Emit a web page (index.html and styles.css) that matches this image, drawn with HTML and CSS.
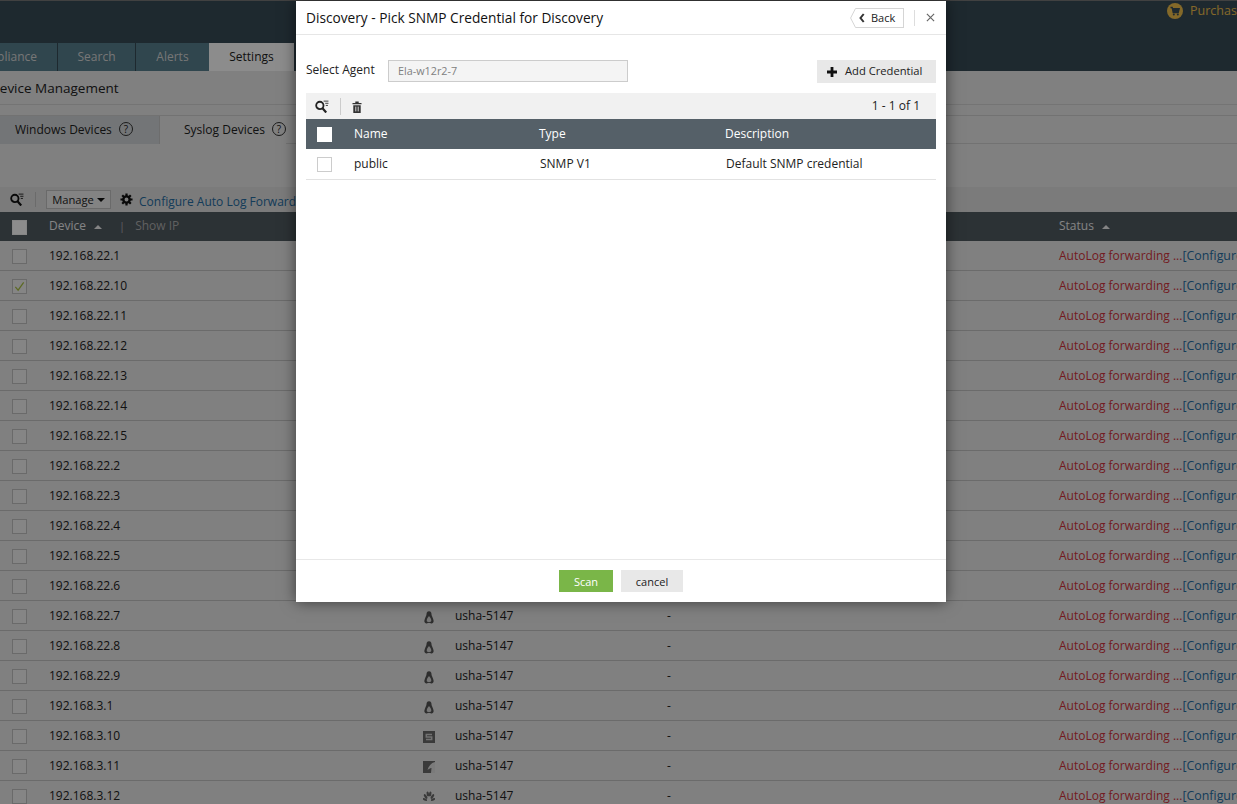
FILE: index.html
```html
<!DOCTYPE html>
<html lang="en">
<head>
<meta charset="utf-8">
<title>Device Management</title>
<link rel="stylesheet" href="styles.css">
</head>
<body>
<svg class="sprites" width="0" height="0" aria-hidden="true">
  <symbol id="i-search" viewBox="0 0 13 12"><circle cx="4.500" cy="5" r="3.400" fill="none" stroke="currentColor" stroke-width="1.700"/><path d="M7 7.600l3.400 4" stroke="currentColor" stroke-width="2" fill="none"/><path d="M8 1h4.500M9.500 3h3M10 5h2" stroke="currentColor" stroke-width=".8" fill="none"/></symbol>
  <symbol id="i-trash" viewBox="0 0 10 12"><path d="M.5 2h9v1.300h-9zM3.300.6h3.400V2H3.300zM1.300 4.200h7.400V12H1.300z" fill="currentColor"/><path d="M3.800 5.600v4.800M6.200 5.600v4.800" stroke="#fff" stroke-width=".8"/></symbol>
  <symbol id="i-linux" viewBox="0 0 10 13"><path d="M5 .2C3 .2 2.500 1.700 2.500 3.200 2.500 4.600 1.500 5.800 .9 7.800.5 9.200.2 10.300.5 11c.4.900 1 1.200 1.800 1.500.7.300 1.200 0 1.500-.4h2.400c.3.400.8.700 1.500.4.800-.3 1.400-.6 1.800-1.500.3-.7 0-1.800-.4-3.200C8.500 5.800 7.500 4.600 7.500 3.200 7.500 1.700 7 .2 5 .2z" fill="currentColor"/><path d="M5 5c-.9 1-2.300 2.900-2.300 4.600 0 1 1 1.700 2.300 1.700s2.300-.7 2.300-1.700C7.300 7.900 5.900 6 5 5z" fill="#d8d8d8"/></symbol>
  <symbol id="i-gear" viewBox="0 0 14 14"><circle cx="7" cy="7" r="3.400" fill="none" stroke="currentColor" stroke-width="2.600"/><path d="M7 .5v3M7 10.500v3M.5 7h3M10.500 7h3M2.400 2.400l2.100 2.100M9.500 9.500l2.100 2.100M11.600 2.400L9.500 4.500M4.500 9.500l-2.100 2.100" stroke="currentColor" stroke-width="2.400"/></symbol>
</svg>

<div class="page">
  <header class="topbar">
    <div class="brandrow">
      <span class="purchase">
        <svg class="coin" viewBox="0 0 16 16"><circle cx="8" cy="8" r="8" fill="#f0bf4c"/><path d="M3.500 4.500h1.700l1 5h5l1-3.800H5.600" fill="#384c57" stroke="#384c57" stroke-width="1.300"/><circle cx="6.800" cy="11.600" r="1" fill="#384c57"/><circle cx="10.800" cy="11.600" r="1" fill="#384c57"/></svg>
        Purchase
      </span>
    </div>
    <nav class="tabs">
      <a class="tab tab-first"><span>Compliance</span></a>
      <a class="tab tab-search">Search</a>
      <a class="tab tab-alerts">Alerts</a>
      <a class="tab tab-active">Settings</a>
    </nav>
  </header>

  <h1 class="pagehead"><span>Device Management</span></h1>

  <div class="subtabs">
    <div class="subtab subtab-off">Windows Devices <span class="help">?</span></div>
    <div class="subtab subtab-on">Syslog Devices <span class="help">?</span></div>
  </div>

  <div class="toolbar">
    <svg class="tool-search"><use href="#i-search"/></svg>
    <span class="tool-sep"></span>
    <button class="manage">Manage <i class="caret"></i></button>
    <svg class="tool-gear"><use href="#i-gear"/></svg>
    <a class="tool-link">Configure Auto Log Forwarding</a>
  </div>

  <div class="grid-head">
    <span class="cell-check"><i class="box box-head"></i></span>
    <span class="head-text">Device <i class="sort"></i><em class="pipe">|</em><em class="showip">Show IP</em></span>
    <span></span><span></span><span></span>
    <span class="head-text">Status <i class="sort"></i></span>
  </div>

  <div class="grid-body">
    <div class="row"><span class="cell-check"><i class="box"></i></span><span>192.168.22.1</span><span></span><span></span><span></span><span class="status"><b>AutoLog forwarding ...</b><a>[Configure]</a></span></div>
    <div class="row"><span class="cell-check"><i class="box box-on"><svg viewBox="0 0 14 14"><path d="M2.500 7.500l3 3.500 6-8.500" fill="none" stroke="#a8c040" stroke-width="1.300"/></svg></i></span><span>192.168.22.10</span><span></span><span></span><span></span><span class="status"><b>AutoLog forwarding ...</b><a>[Configure]</a></span></div>
    <div class="row"><span class="cell-check"><i class="box"></i></span><span>192.168.22.11</span><span></span><span></span><span></span><span class="status"><b>AutoLog forwarding ...</b><a>[Configure]</a></span></div>
    <div class="row"><span class="cell-check"><i class="box"></i></span><span>192.168.22.12</span><span></span><span></span><span></span><span class="status"><b>AutoLog forwarding ...</b><a>[Configure]</a></span></div>
    <div class="row"><span class="cell-check"><i class="box"></i></span><span>192.168.22.13</span><span></span><span></span><span></span><span class="status"><b>AutoLog forwarding ...</b><a>[Configure]</a></span></div>
    <div class="row"><span class="cell-check"><i class="box"></i></span><span>192.168.22.14</span><span></span><span></span><span></span><span class="status"><b>AutoLog forwarding ...</b><a>[Configure]</a></span></div>
    <div class="row"><span class="cell-check"><i class="box"></i></span><span>192.168.22.15</span><span></span><span></span><span></span><span class="status"><b>AutoLog forwarding ...</b><a>[Configure]</a></span></div>
    <div class="row"><span class="cell-check"><i class="box"></i></span><span>192.168.22.2</span><span></span><span></span><span></span><span class="status"><b>AutoLog forwarding ...</b><a>[Configure]</a></span></div>
    <div class="row"><span class="cell-check"><i class="box"></i></span><span>192.168.22.3</span><span></span><span></span><span></span><span class="status"><b>AutoLog forwarding ...</b><a>[Configure]</a></span></div>
    <div class="row"><span class="cell-check"><i class="box"></i></span><span>192.168.22.4</span><span></span><span></span><span></span><span class="status"><b>AutoLog forwarding ...</b><a>[Configure]</a></span></div>
    <div class="row"><span class="cell-check"><i class="box"></i></span><span>192.168.22.5</span><span></span><span></span><span></span><span class="status"><b>AutoLog forwarding ...</b><a>[Configure]</a></span></div>
    <div class="row"><span class="cell-check"><i class="box"></i></span><span>192.168.22.6</span><span></span><span></span><span></span><span class="status"><b>AutoLog forwarding ...</b><a>[Configure]</a></span></div>
    <div class="row"><span class="cell-check"><i class="box"></i></span><span>192.168.22.7</span><span class="os"><svg class="os-icon"><use href="#i-linux"/></svg></span><span>usha-5147</span><span>-</span><span class="status"><b>AutoLog forwarding ...</b><a>[Configure]</a></span></div>
    <div class="row"><span class="cell-check"><i class="box"></i></span><span>192.168.22.8</span><span class="os"><svg class="os-icon"><use href="#i-linux"/></svg></span><span>usha-5147</span><span>-</span><span class="status"><b>AutoLog forwarding ...</b><a>[Configure]</a></span></div>
    <div class="row"><span class="cell-check"><i class="box"></i></span><span>192.168.22.9</span><span class="os"><svg class="os-icon"><use href="#i-linux"/></svg></span><span>usha-5147</span><span>-</span><span class="status"><b>AutoLog forwarding ...</b><a>[Configure]</a></span></div>
    <div class="row"><span class="cell-check"><i class="box"></i></span><span>192.168.3.1</span><span class="os"><svg class="os-icon"><use href="#i-linux"/></svg></span><span>usha-5147</span><span>-</span><span class="status"><b>AutoLog forwarding ...</b><a>[Configure]</a></span></div>
    <div class="row"><span class="cell-check"><i class="box"></i></span><span>192.168.3.10</span><span class="os"><svg class="os-square" viewBox="0 0 12 12"><path d="M0 0h12v12H0z" fill="currentColor"/><path d="M9 3.400H3.300v2.600h5.400v2.600H3" fill="none" stroke="#d0d0d0" stroke-width="1.500"/></svg></span><span>usha-5147</span><span>-</span><span class="status"><b>AutoLog forwarding ...</b><a>[Configure]</a></span></div>
    <div class="row"><span class="cell-check"><i class="box"></i></span><span>192.168.3.11</span><span class="os"><svg class="os-square" viewBox="0 0 12 12"><path d="M0 0h12v12H0z" fill="currentColor"/><path d="M12 1C8 2 5.500 5 4.500 9 6.500 7.500 7.800 7 8.500 7L8 12h4z" fill="#e0e0e0"/></svg></span><span>usha-5147</span><span>-</span><span class="status"><b>AutoLog forwarding ...</b><a>[Configure]</a></span></div>
    <div class="row"><span class="cell-check"><i class="box"></i></span><span>192.168.3.12</span><span class="os"><svg class="os-square" viewBox="0 0 12 12"><g fill="currentColor"><ellipse cx="4.800" cy="3" rx="1.200" ry="2.600" transform="rotate(-10 4.800 3)"/><ellipse cx="7.200" cy="3" rx="1.200" ry="2.600" transform="rotate(10 7.200 3)"/><ellipse cx="2.600" cy="5.500" rx="1.200" ry="2.700" transform="rotate(-35 2.600 5.500)"/><ellipse cx="9.400" cy="5.500" rx="1.200" ry="2.700" transform="rotate(35 9.400 5.500)"/><ellipse cx="1.900" cy="8.500" rx="1.100" ry="2.300" transform="rotate(-65 1.900 8.500)"/><ellipse cx="10.100" cy="8.500" rx="1.100" ry="2.300" transform="rotate(65 10.100 8.500)"/></g></svg></span><span>usha-5147</span><span>-</span><span class="status"><b>AutoLog forwarding ...</b><a>[Configure]</a></span></div>
  </div>
</div>

<div class="backdrop"></div>

<section class="modal">
  <header class="modal-head">
    <h2 class="modal-title">Discovery - Pick SNMP Credential for Discovery</h2>
    <button class="back"><svg class="back-tip" viewBox="0 0 7 20"><path d="M7 .5H5.500L.6 10l4.900 9.500H7" fill="#fff" stroke="#d5d5d5"/></svg><svg class="back-chev" viewBox="0 0 6 10"><path d="M4.700 1L1.500 5l3.200 4" fill="none" stroke="#333" stroke-width="2"/></svg>Back</button>
    <span class="head-sep"></span>
    <button class="close"><svg viewBox="0 0 10 10"><path d="M1 1l8 8M9 1l-8 8" stroke="#666" stroke-width="1.300" fill="none"/></svg></button>
  </header>

  <div class="modal-body">
    <div class="agent-row">
      <label class="agent-label">Select Agent</label>
      <div class="agent-input">Ela-w12r2-7</div>
      <button class="add"><svg viewBox="0 0 10 10"><path d="M3.600 0h2.800v3.600H10v2.800H6.400V10H3.600V6.400H0V3.600h3.600z" fill="#111"/></svg>Add Credential</button>
    </div>

    <div class="cred-tools">
      <svg class="cred-search"><use href="#i-search"/></svg>
      <span class="cred-sep"></span>
      <svg class="cred-trash"><use href="#i-trash"/></svg>
      <span class="pager">1 - 1 of 1</span>
    </div>
    <div class="cred-head">
      <span class="cred-check"><i class="cbox cbox-head"></i></span>
      <span class="cred-label">Name</span><span class="cred-label">Type</span><span class="cred-label">Description</span>
    </div>
    <div class="cred-row">
      <span class="cred-check"><i class="cbox"></i></span>
      <span class="cred-value">public</span><span class="cred-value">SNMP V1</span><span class="cred-value">Default SNMP credential</span>
    </div>
  </div>

  <footer class="modal-foot">
    <button class="scan">Scan</button>
    <button class="cancel">cancel</button>
  </footer>
</section>
</body>
</html>
```

FILE: styles.css
```css
* { box-sizing: border-box; }
html, body { margin: 0; padding: 0; height: 100%; }
body {
  width: 1237px;
  height: 804px;
  overflow: hidden;
  position: relative;
  background: #e9e9e9;
  font-family: "Open Sans", "Liberation Sans", sans-serif;
  font-size: 12px;
  color: #222;
}
.sprites { position: absolute; }
button { font-family: inherit; border: 0; padding: 0; cursor: pointer; }
h1, h2 { margin: 0; font-weight: 500; }
em, i { font-style: normal; }

.page { width: 1237px; height: 804px; overflow: hidden; background: #e9e9e9; }

/* top bar */
.topbar { height: 71px; background: #384c57; border-top: 1px solid #777; }
.brandrow { height: 42px; display: flex; justify-content: flex-end; padding-top: 2px; }
.purchase { display: flex; gap: 7px; width: 70px; height: 15px; align-items: center; color: #f0bf4c; font-size: 12.500px; white-space: nowrap; flex-shrink: 0; }
.coin { width: 16px; height: 16px; flex-shrink: 0; }
.tabs { display: flex; height: 28px; }
.tab { display: flex; align-items: center; justify-content: center; background: #58808f; color: #d8d8d8; font-size: 12px; border-right: 1px solid #384c57; padding-bottom: 2px; }
.tab-first { width: 58px; justify-content: flex-end; padding-right: 20px; overflow: hidden; white-space: nowrap; }
.tab-search { width: 78px; }
.tab-alerts { width: 73px; border-right: 0; }
.tab-active { width: 85px; background: #fff; color: #222; border-right: 0; }

.pagehead { height: 34px; border-bottom: 1px solid #d4d4d4; font-size: 13.500px; color: #222; display: flex; justify-content: flex-start; align-items: center; overflow: hidden; white-space: nowrap; }
.pagehead span { margin-left: -10px; }

.subtabs { margin-top: 10px; height: 29px; display: flex; border-top: 1px solid #d0d0d0; border-bottom: 1px solid #d0d0d0; }
.subtab { display: flex; align-items: center; gap: 7px; font-size: 12px; height: 28px; padding-bottom: 2px; }
.subtab-off { width: 160px; padding-left: 15px; background: #d2d6d9; border-right: 1px solid #c6c6c6; }
.subtab-on { padding-left: 24px; background: #e9e9e9; }
.help { width: 14px; height: 14px; border: 1px solid #333; border-radius: 50%; font-size: 10px; display: inline-flex; align-items: center; justify-content: center; }

.toolbar { margin-top: 43px; height: 25px; background: #e0e0e0; display: flex; align-items: center; }
.tool-search { width: 14px; height: 13px; margin-left: 10px; color: #111; }
.tool-sep { width: 1px; height: 15px; background: #c4c4c4; margin: 0 10px 0 11px; }
.manage { width: 65px; height: 19px; border: 1px solid #c2c2c2; background: #efefef; color: #222; font-size: 11.200px; display: flex; align-items: center; justify-content: center; gap: 3px; }
.caret { width: 0; height: 0; border: 4px solid transparent; border-top: 4px solid #111; border-bottom: 0; }
.tool-gear { width: 13px; height: 13px; margin-left: 9px; color: #111; }
.tool-link { margin-left: 6px; color: #266da3; font-size: 12px; white-space: nowrap; position: relative; top: 2px; }

.grid-head, .row {
  display: grid;
  grid-template-columns: 49px 372px 34px 212px 392px 178px;
  align-items: center;
  white-space: nowrap;
}
.grid-head { height: 29px; background: #505b62; color: #f0f0f0; font-size: 12px; }
.head-text { margin-bottom: 2px; }
.cell-check { display: flex; padding-left: 12px; margin-top: 1px; }
.box { width: 15px; height: 15px; background: #f2f2f2; border: 1px solid #c2c2c2; display: block; }
.box svg { display: block; width: 13px; height: 13px; }
.box-head { background: #fff; border-color: #f4f4f4; }
.sort { display: inline-block; width: 0; height: 0; margin: 0 0 1px 5px; border: 4px solid transparent; border-bottom: 4px solid #f0f0f0; border-top: 0; }
.pipe { margin: 0 10px 0 17px; color: #b0b0b0; font-size: 11px; }
.showip { color: #b0b0b0; }
.row { height: 30px; border-bottom: 1px solid #c4c4c4; font-size: 12px; color: #222; }
.os { display: flex; }
.os-icon { width: 10px; height: 13px; margin: 3px 0 0 3px; color: #555; }
.os-square { width: 12px; height: 12px; margin: 3px 0 0 2px; color: #6a6a6a; }
.status b { font-weight: 400; color: #d2333c; }
.status a { color: #266da3; font-size: 12.400px; }

/* dim layer + modal */
.backdrop { position: absolute; inset: 0; background: rgba(0, 0, 0, .45); }
.modal {
  position: absolute;
  left: 296px;
  top: 1px;
  width: 650px;
  height: 601px;
  background: #fff;
  box-shadow: 0 0 14px rgba(0, 0, 0, .55);
  display: flex;
  flex-direction: column;
}
.modal-head { height: 34px; flex-shrink: 0; border-bottom: 1px solid #e6e6e6; display: flex; align-items: center; padding: 0 10px; }
.modal-title { font-size: 13.700px; color: #111; flex: 1; white-space: nowrap; }
.back { position: relative; width: 48px; height: 20px; margin-right: 10px; background: #fff; border: 1px solid #d5d5d5; border-left: 0; display: flex; align-items: center; font-size: 11px; color: #222; padding-left: 3px; gap: 6px; }
.back-tip { position: absolute; left: -6px; top: -1px; width: 7px; height: 20px; }
.back-chev { width: 6px; height: 10px; }
.head-sep { width: 1px; height: 16px; background: #ddd; margin-right: 11px; }
.close { background: none; width: 9px; height: 9px; display: flex; margin-right: 1px; }
.close svg { width: 9px; height: 9px; }

.modal-body { flex: 1; padding: 0 10px; }
.agent-row { display: flex; align-items: flex-start; margin-top: 25px; height: 23px; }
.agent-label { width: 82px; font-size: 12px; color: #222; line-height: 20px; }
.agent-input { width: 240px; height: 22px; background: #f4f4f4; border: 1px solid #ccc; color: #808080; font-size: 10.800px; padding: 0 0 2px 9px; display: flex; align-items: center; }
.add { margin-left: auto; width: 119px; height: 23px; background: #e8e8e8; color: #222; font-size: 11.200px; display: flex; align-items: center; padding: 0 0 2px 10px; gap: 8px; }
.add svg { width: 10px; height: 10px; margin-top: 2px; }

.cred-tools { margin-top: 10px; height: 26px; background: #f1f1f1; display: flex; align-items: center; }
.cred-search { width: 14px; height: 13px; margin-left: 9px; color: #222; }
.cred-sep { width: 1px; height: 17px; background: #ccc; margin: 0 11px 0 11px; }
.cred-trash { width: 10px; height: 12px; margin-top: 2px; color: #333; }
.pager { margin-left: auto; margin-right: 16px; font-size: 12px; color: #222; padding-bottom: 1px; }

.cred-head, .cred-row { display: grid; align-items: center; }
.cred-head { height: 30px; grid-template-columns: 48px 185px 186px 1fr; background: #556068; color: #fff; font-size: 12px; }
.cred-label { margin-bottom: 2px; }
.cred-row { height: 31px; grid-template-columns: 48px 186px 186px 1fr; border-bottom: 1px solid #e2e2e2; color: #222; font-size: 12px; }
.cred-value { margin-bottom: 1px; }
.cred-check { display: flex; padding-left: 11px; margin-top: 1px; }
.cbox { display: block; width: 15px; height: 15px; background: #fff; border: 1px solid #ccc; }
.cbox-head { border-color: #fff; }

.modal-foot { height: 43px; flex-shrink: 0; border-top: 1px solid #e8e8e8; display: flex; justify-content: center; align-items: center; gap: 8px; }
.scan { width: 54px; height: 22px; background: #7ab648; color: #fff; font-size: 11px; }
.cancel { width: 62px; height: 22px; background: #e8e8e8; color: #222; font-size: 11px; }
```
